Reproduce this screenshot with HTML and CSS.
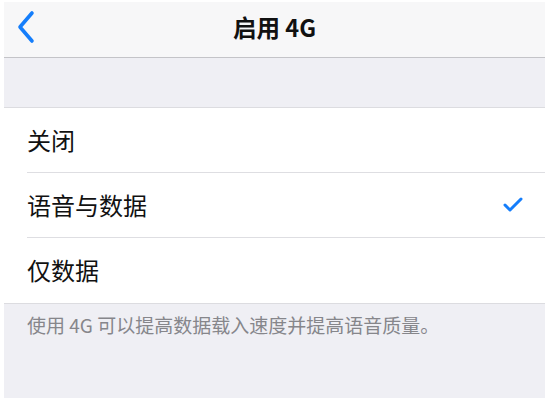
FILE: index.html
```html
<!DOCTYPE html>
<html lang="zh-CN">
<head>
    <meta charset="UTF-8">
    <meta name="viewport" content="width=device-width, initial-scale=1.0">
    <title>启用 4G</title>
    <link rel="stylesheet" href="styles.css">
</head>
<body>
    <div class="screen">
        <div class="nav-bar">
            <span class="back-btn">
                <svg width="20" height="34" viewBox="0 0 20 34">
                    <path d="M16 3 L4 17 L16 31" fill="none" stroke="#157efb" stroke-width="3.6" stroke-linecap="round" stroke-linejoin="round"/>
                </svg>
            </span>
            <h1 class="nav-title">启用 4G</h1>
        </div>

        <div class="spacer"></div>

        <ul class="option-list">
            <li class="option">关闭</li>
            <li class="option">
                <span>语音与数据</span>
                <svg class="check" width="20" height="15" viewBox="0 0 20 15">
                    <path d="M2 8 L7 13 L18 2" fill="none" stroke="#157efb" stroke-width="3" stroke-linecap="round" stroke-linejoin="round"/>
                </svg>
            </li>
            <li class="option">仅数据</li>
        </ul>

        <p class="footnote">使用 4G 可以提高数据载入速度并提高语音质量。</p>
    </div>
</body>
</html>
```

FILE: styles.css
```css
body {
    margin: 0;
    padding: 2px 3px 2px 4px;
    background-color: #fff;
    font-family: "Noto Sans CJK SC", "Liberation Sans", sans-serif;
}

.screen {
    height: 396px;
    background-color: #efeff4;
    display: flex;
    flex-direction: column;
}

.nav-bar {
    height: 51px;
    padding-bottom: 4px;
    background-color: #f7f7f8;
    border-bottom: 1px solid #c4c4c8;
    display: flex;
    align-items: center;
    justify-content: center;
    position: relative;
}

.back-btn {
    position: absolute;
    left: 12px;
    top: 8px;
}

.nav-title {
    margin: 0;
    font-size: 23.5px;
    font-weight: 600;
    color: #111;
    line-height: 1;
}

.spacer {
    height: 49px;
    border-bottom: 1px solid #dcdce0;
}

.option-list {
    list-style: none;
    margin: 0;
    padding: 0 0 0 23px;
    background-color: #fff;
    border-bottom: 1px solid #dcdce0;
}

.option {
    height: 62px;
    padding-bottom: 2px;
    display: flex;
    align-items: center;
    justify-content: space-between;
    padding-right: 22px;
    font-size: 24px;
    color: #111;
    border-bottom: 1px solid #dedee2;
}

.option:last-child {
    border-bottom: none;
    height: 63px;
}

.check {
    display: block;
}

.footnote {
    margin: 0;
    padding: 8px 0 0 23px;
    font-size: 19px;
    line-height: 26px;
    color: #86868b;
}
```
